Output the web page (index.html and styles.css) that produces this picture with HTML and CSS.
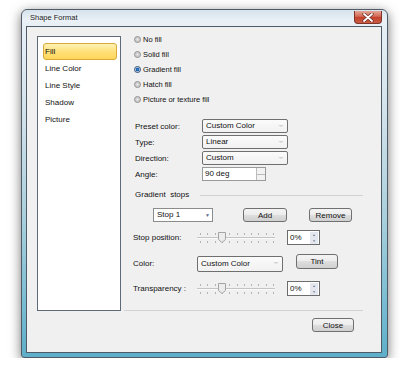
FILE: index.html
```html
<!DOCTYPE html>
<html lang="en">
<head>
  <meta charset="UTF-8">
  <title>Shape Format</title>
  <link rel="stylesheet" href="styles.css">
</head>
<body>
  <div class="window">
    <!-- Tittellinje -->
    <div class="titlebar">
      <span class="title">Shape Format</span>
      <span class="close-x">
        <svg width="12" height="9" viewBox="0 0 12 9">
          <path d="M2 1 L10 8 M10 1 L2 8" stroke="#6a2a20" stroke-width="3.2" stroke-linecap="round"/>
          <path d="M2 1 L10 8 M10 1 L2 8" stroke="#fff" stroke-width="1.8" stroke-linecap="round"/>
        </svg>
      </span>
    </div>

    <div class="client">
      <div class="main">
        <!-- Venstre meny -->
        <ul class="nav">
          <li class="active">Fill</li>
          <li>Line Color</li>
          <li>Line Style</li>
          <li>Shadow</li>
          <li>Picture</li>
        </ul>

        <!-- Innstillinger for fyll -->
        <div class="panel">
          <div class="radios">
            <div class="radio"><span class="dot"></span>No fill</div>
            <div class="radio"><span class="dot"></span>Solid fill</div>
            <div class="radio"><span class="dot on"></span>Gradient fill</div>
            <div class="radio"><span class="dot"></span>Hatch fill</div>
            <div class="radio"><span class="dot"></span>Picture or texture fill</div>
          </div>

          <div class="fields">
            <div class="field-row">
              <span class="lbl">Preset color:</span>
              <span class="combo">Custom Color<span class="faint-arrow"></span></span>
            </div>
            <div class="field-row">
              <span class="lbl">Type:</span>
              <span class="combo">Linear<span class="faint-arrow"></span></span>
            </div>
            <div class="field-row">
              <span class="lbl">Direction:</span>
              <span class="combo">Custom<span class="faint-arrow"></span></span>
            </div>
            <div class="field-row">
              <span class="lbl">Angle:</span>
              <span class="angle">
                <span class="angle-text">90 deg</span>
                <span class="angle-spin"><span></span><span></span></span>
              </span>
            </div>
          </div>

          <div class="group-head">
            <span>Gradient&nbsp; stops</span>
            <span class="rule"></span>
          </div>

          <div class="stop-row">
            <span class="stop-combo">Stop 1<span class="arrow">&#9660;</span></span>
            <button class="btn btn-add">Add</button>
            <button class="btn btn-remove">Remove</button>
          </div>

          <div class="slide-row">
            <span class="lbl2">Stop position:</span>
            <span class="slider">
              <svg class="thumb" width="8" height="11" viewBox="0 0 8 11">
                <path d="M0.5 0.5 H7.5 V7.5 L4 10.5 L0.5 7.5 Z" fill="#ececec" stroke="#a4a4a4"/>
              </svg>
            </span>
            <span class="spin">0%<span class="spin-btns"><span>&#9650;</span><span>&#9660;</span></span></span>
          </div>

          <div class="color-row">
            <span class="lbl2">Color:</span>
            <span class="color-combo">Custom Color<span class="faint-arrow"></span></span>
            <button class="btn btn-tint">Tint</button>
          </div>

          <div class="slide-row trans-row">
            <span class="lbl2">Transparency :</span>
            <span class="slider">
              <svg class="thumb" width="8" height="11" viewBox="0 0 8 11">
                <path d="M0.5 0.5 H7.5 V7.5 L4 10.5 L0.5 7.5 Z" fill="#ececec" stroke="#a4a4a4"/>
              </svg>
            </span>
            <span class="spin">0%<span class="spin-btns"><span>&#9650;</span><span>&#9660;</span></span></span>
          </div>
        </div>
      </div>

      <div class="footer">
        <button class="btn btn-close">Close</button>
      </div>
    </div>
  </div>
</body>
</html>
```

FILE: styles.css
```css
/* Generelle stiler */
* { box-sizing: border-box; }
body {
  margin: 0;
  padding: 0;
  background-color: #fff;
  font-family: "Liberation Sans", Arial, sans-serif;
  font-size: 8px;
  color: #111;
}

/* Vindusramme */
.window {
  width: 367px;
  height: 349px;
  margin: 9px 0 0 21px;
  padding: 0 5px 4px 4px;
  border: 1px solid #4f5b67;
  border-radius: 6px 6px 3px 3px;
  background: linear-gradient(180deg, #d6e2ec 0, #e9f0f6 10px, #d2e1ea 30%, #a9d0dc 60%, #78bcd2 85%, #5eaec9 100%);
  box-shadow: 0 3px 12px rgba(0,0,0,0.55);
  display: flex;
  flex-direction: column;
}
.titlebar {
  height: 16px;
  display: flex;
  justify-content: space-between;
  align-items: flex-start;
}
.title {
  padding-left: 4px;
  line-height: 15px;
  font-size: 7.5px;
  color: #1a1a1a;
  text-shadow: 0 0 4px #fff;
}
.close-x {
  width: 28px;
  height: 13px;
  margin-top: 1px;
  border: 1px solid #7a3528;
  border-top: none;
  border-radius: 0 0 4px 4px;
  background: linear-gradient(180deg, #e4a898 0, #d36a55 45%, #c2412c 50%, #cc5b43 100%);
  display: flex;
  align-items: center;
  justify-content: center;
}

/* Klientomrade */
.client {
  flex: 1;
  border: 1px solid #4d5a67;
  background-color: #f0f0f0;
  padding: 5px 0 0 10px;
}
.main {
  display: flex;
  align-items: flex-start;
  gap: 3px;
}

/* Venstre meny */
.nav {
  list-style: none;
  margin: 4px 0 0 0;
  padding: 6px 0 0 0;
  width: 84px;
  height: 275px;
  background-color: #fff;
  border: 1px solid #5f6a78;
}
.nav li {
  width: 74px;
  height: 17px;
  line-height: 15px;
  margin-left: 5px;
  padding-left: 1px;
  border: 1px solid transparent;
  border-radius: 3px;
}
.nav li.active {
  border-color: #d8a83a;
  background: linear-gradient(180deg, #fff3b4 0, #ffe07a 50%, #ffd65a 100%);
}

/* Hovedpanel */
.panel {
  width: 239px;
  height: 279px;
  border-bottom: 1px solid #d2d2d2;
}
.radios { padding-left: 10px; }
.radio {
  height: 15px;
  display: flex;
  align-items: center;
  font-size: 7.5px;
}
.dot {
  width: 7px;
  height: 7px;
  margin-right: 2px;
  border: 1px solid #8d8d8d;
  border-radius: 50%;
  background: radial-gradient(circle, #e9e9e9 0, #c9c9c9 55%, #f4f4f4 100%);
}
.dot.on {
  border-color: #2e4f78;
  background: radial-gradient(circle, #2d7fd0 0, #1d5fa8 45%, #c8d8e8 60%, #eef3f8 100%);
}

/* Skjemafelt */
.fields {
  margin-top: 12px;
  display: flex;
  flex-direction: column;
  gap: 2px;
}
.field-row {
  height: 14px;
  display: flex;
  align-items: center;
}
.lbl {
  width: 78px;
  padding-left: 11px;
}
.combo, .color-combo {
  position: relative;
  width: 86px;
  height: 14px;
  padding-left: 3px;
  line-height: 12px;
  border: 1px solid #6f6f6f;
  border-radius: 2px;
  background: linear-gradient(180deg, #fbfbfb 0, #f1f1f1 100%);
}
.faint-arrow {
  position: absolute;
  right: 3px;
  top: 5px;
  border-left: 3px solid transparent;
  border-right: 3px solid transparent;
  border-top: 2px solid #d4d4d4;
}
.angle {
  width: 64px;
  height: 14px;
  display: flex;
  border: 1px solid #9a9a9a;
  background-color: #fff;
}
.angle-text {
  flex: 1;
  padding-left: 2px;
  line-height: 12px;
}
.angle-spin {
  width: 9px;
  display: flex;
  flex-direction: column;
  border-left: 1px solid #bbb;
}
.angle-spin span {
  flex: 1;
  background-color: #f2f2f2;
}
.angle-spin span + span { border-top: 1px solid #bbb; }

/* Gradient stops */
.group-head {
  margin-top: 6px;
  height: 14px;
  padding-left: 11px;
  display: flex;
  align-items: center;
}
.rule {
  flex: 1;
  margin: 3px 0 0 11px;
  border-top: 1px solid #d0d0d0;
}
.stop-row {
  margin-top: 7px;
  height: 14px;
  padding-left: 29px;
  display: flex;
}
.stop-combo {
  position: relative;
  width: 60px;
  height: 14px;
  padding-left: 3px;
  line-height: 12px;
  border: 1px solid #8c8c8c;
  background-color: #fff;
}
.stop-combo .arrow {
  position: absolute;
  right: 2px;
  top: 0;
  font-size: 5px;
  line-height: 12px;
  color: #5b6b8e;
}

/* Knapper */
.btn {
  height: 14px;
  padding: 0;
  font-family: "Liberation Sans", Arial, sans-serif;
  font-size: 8px;
  color: #111;
  border: 1px solid #707070;
  border-radius: 3px;
  background: linear-gradient(180deg, #f4f4f4 0, #ececec 50%, #dedede 50%, #d0d0d0 100%);
}
.btn-add { width: 44px; margin-left: 30px; }
.btn-remove { width: 43px; margin-left: 22px; }
.btn-tint { width: 42px; height: 15px; margin-left: 13px; }
.btn-close { width: 42px; height: 14px; }

/* Glidere */
.slide-row {
  margin-top: 8px;
  height: 15px;
  padding-left: 9px;
  display: flex;
  align-items: center;
}
.trans-row { margin-top: 9px; }
.lbl2 { width: 64px; }
.slider {
  position: relative;
  width: 78px;
  height: 15px;
  background:
    linear-gradient(#c4c4c4, #c4c4c4) 0 7px / 100% 1px no-repeat,
    linear-gradient(#fafafa, #fafafa) 0 8px / 100% 1px no-repeat,
    repeating-linear-gradient(90deg, #b4b4b4 0 1px, transparent 1px 7.3px) 3px 3px / 74px 2px no-repeat,
    repeating-linear-gradient(90deg, #b4b4b4 0 1px, transparent 1px 7.3px) 3px 11px / 74px 2px no-repeat;
}
.thumb {
  position: absolute;
  left: 21px;
  top: 2px;
}
.spin {
  width: 33px;
  height: 15px;
  margin-left: 12px;
  padding-left: 2px;
  line-height: 13px;
  display: flex;
  justify-content: space-between;
  border: 1px solid #6c6c6c;
  background-color: #fff;
}
.spin-btns {
  width: 8px;
  display: flex;
  flex-direction: column;
  margin: 1px 1px 1px 0;
}
.spin-btns span {
  flex: 1;
  font-size: 3px;
  line-height: 6px;
  text-align: center;
  color: #4e5f80;
  background-color: #e4e8ee;
}

/* Farge */
.color-row {
  margin-top: 9px;
  height: 18px;
  padding-left: 9px;
  display: flex;
  align-items: flex-start;
}
.color-row .lbl2 { line-height: 20px; }
.color-combo {
  margin-top: 2px;
  height: 16px;
  line-height: 14px;
}

/* Bunn */
.footer {
  display: flex;
  justify-content: flex-end;
  margin-top: 7px;
  padding-right: 27px;
}
```
